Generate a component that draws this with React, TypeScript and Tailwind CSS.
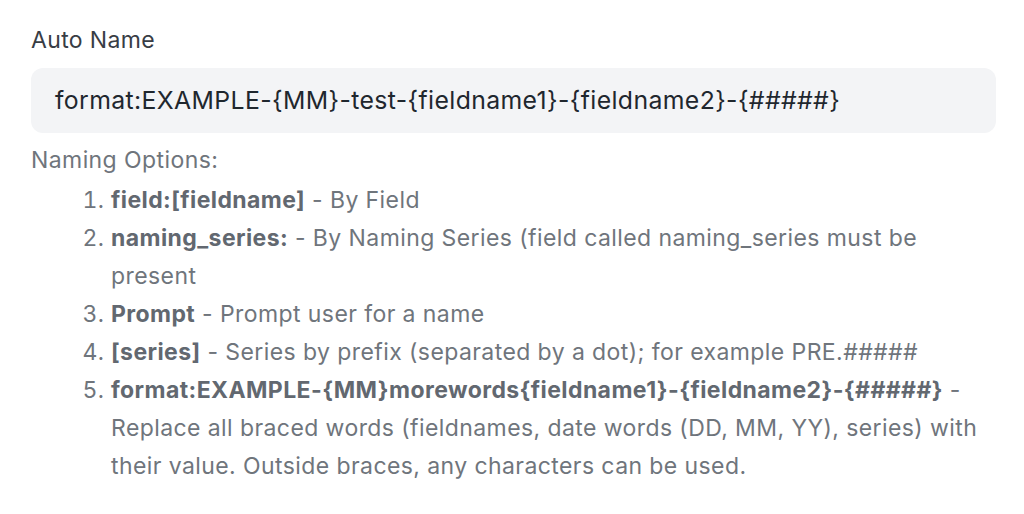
export default function App() {
  return (
    <div className="min-h-screen bg-white pl-[31px] pr-[28px] pt-[25px] font-['Inter',sans-serif]">
      <label className="block text-[23px] leading-[30px] tracking-[0.015em] text-[#383d45]">Auto Name</label>
      <div className="mt-[13px] flex h-[65px] items-center rounded-[12px] bg-[#f3f4f6] px-[24px] text-[24.8px] tracking-[0.015em] text-[#1f272e]">
        format:EXAMPLE-{'{MM}'}-test-{'{fieldname1}'}-{'{fieldname2}'}-{'{#####}'}
      </div>
      <div className="mt-[8px] text-[23px] leading-[38px] tracking-[0.018em] text-[#6f757c]">
        <p>Naming Options:</p>
        <ol className="mt-[2px] list-decimal pl-[80px]">
          <li>
            <b className="font-bold text-[#626870]">field:[fieldname]</b> - By Field
          </li>
          <li>
            <b className="font-bold text-[#626870]">naming_series:</b> - By Naming Series (field called naming_series must be present
          </li>
          <li>
            <b className="font-bold text-[#626870]">Prompt</b> - Prompt user for a name
          </li>
          <li>
            <b className="font-bold text-[#626870]">[series]</b> - Series by prefix (separated by a dot); for example PRE.#####
          </li>
          <li>
            <b className="font-bold text-[#626870]">format:EXAMPLE-{'{MM}'}morewords{'{fieldname1}'}-{'{fieldname2}'}-{'{#####}'}</b> - Replace all braced words (fieldnames, date words (DD, MM, YY), series) with their value. Outside braces, any characters can be used.
          </li>
        </ol>
      </div>
    </div>
  );
}
